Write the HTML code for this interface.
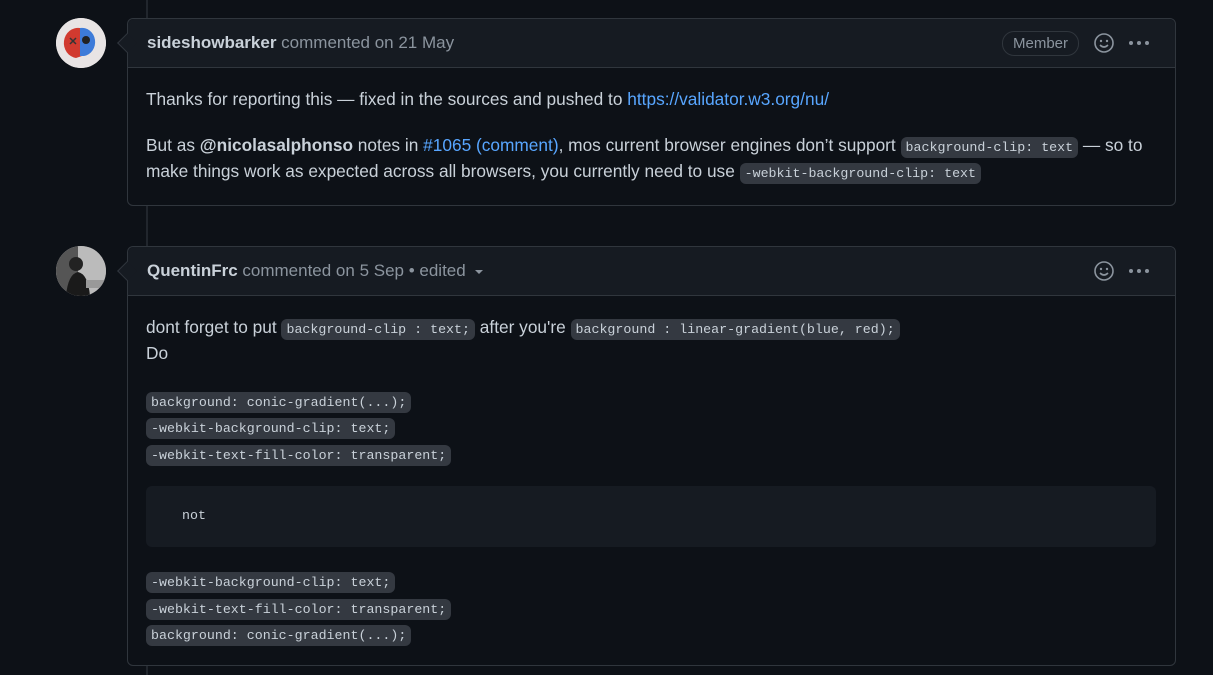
<!DOCTYPE html>
<html><head><meta charset="utf-8"><style>
*{box-sizing:border-box;margin:0;padding:0}
body{width:1213px;height:672px;background:#0d1117;position:relative;overflow:hidden;font-family:"Liberation Sans",sans-serif;color:#c9d1d9;font-size:17.3px}
.line{position:absolute;left:146px;width:2px;background:#21262d}
.box{position:absolute;left:127px;width:1049px;border:1px solid #30363d;border-radius:6px;background:#0d1117}
.hd{height:49px;background:#161b22;border-bottom:1px solid #30363d;border-radius:6px 6px 0 0;position:relative;padding-left:19px;line-height:48px;color:#8b949e;font-size:17px}
.hd b{color:#c9d1d9}
.arrow{position:absolute;left:-8px;top:17px;width:14px;height:14px;background:#161b22;border-left:1px solid #30363d;border-bottom:1px solid #30363d;transform:rotate(45deg)}
.av{position:absolute;left:56px;width:50px;height:50px;border-radius:50%;overflow:hidden}
.t{position:absolute;left:146px;white-space:nowrap}
a{color:#58a6ff;text-decoration:none}
code{font-family:"Liberation Mono",monospace;font-size:13.3px;background:#343941;border-radius:6px;padding:3px 5px;color:#c9d1d9}
.icons{position:absolute;right:26px;top:0;height:48px;display:flex;align-items:center;gap:14px}
.badge{border:1px solid #30363d;border-radius:12px;padding:0 10px;height:25px;line-height:24px;font-size:15px;color:#8b949e;margin-right:0}
.dots{display:flex;gap:4px}.dots i{width:4px;height:4px;border-radius:50%;background:#8b949e;display:block}
</style></head><body>
<div class="line" style="top:0;height:18px"></div>
<div class="line" style="top:205px;height:41px"></div>
<div class="line" style="top:665px;height:10px"></div>

<div class="av" style="top:18px;background:#eee">
<svg width="50" height="50"><circle cx="25" cy="25" r="25" fill="#e8e4e4"/><path d="M24 10 A14 15 0 0 0 20 40 L26 38 Z" fill="#d13a2f"/><path d="M24 10 A13 14 0 0 1 28 38 L24 38 Z" fill="#3d7bd9"/><circle cx="30" cy="22" r="4" fill="#222"/><path d="M14 20 l6 6 M20 20 l-6 6" stroke="#333" stroke-width="1.5"/></svg></div>
<div class="box" style="top:18px;height:188px">
<div class="hd"><div class="arrow"></div><b>sideshowbarker</b> commented on 21 May
<div class="icons"><span class="badge">Member</span>
<svg width="22" height="22" viewBox="0 0 22 22"><circle cx="11" cy="11" r="9" fill="none" stroke="#8b949e" stroke-width="1.6"/><circle cx="8" cy="9" r="1.2" fill="#8b949e"/><circle cx="14" cy="9" r="1.2" fill="#8b949e"/><path d="M7 13 q4 4 8 0" fill="none" stroke="#8b949e" stroke-width="1.6"/></svg>
<span class="dots"><i></i><i></i><i></i></span></div></div>
</div>
<div class="t" style="top:89px">Thanks for reporting this — fixed in the sources and pushed to <a>https://validator.w3.org/nu/</a></div>
<div class="t" style="top:135px">But as <b>@nicolasalphonso</b> notes in <a>#1065 (comment)</a>, mos current browser engines don’t support <code>background-clip: text</code> — so to</div>
<div class="t" style="top:161px">make things work as expected across all browsers, you currently need to use <code>-webkit-background-clip: text</code></div>

<div class="av" style="top:246px;background:#888">
<svg width="50" height="50"><rect width="50" height="50" fill="#bbb"/><rect x="0" y="0" width="22" height="50" fill="#555"/><circle cx="20" cy="18" r="7" fill="#222"/><path d="M10 50 Q12 28 22 26 Q32 28 34 50Z" fill="#1a1a1a"/><rect x="30" y="34" width="20" height="8" fill="#999"/></svg></div>
<div class="box" style="top:246px;height:420px">
<div class="hd"><div class="arrow"></div><b>QuentinFrc</b> commented on 5 Sep • edited <span style="display:inline-block;border-left:4px solid transparent;border-right:4px solid transparent;border-top:4px solid #8b949e;margin-left:5px;vertical-align:middle"></span>
<div class="icons">
<svg width="22" height="22" viewBox="0 0 22 22"><circle cx="11" cy="11" r="9" fill="none" stroke="#8b949e" stroke-width="1.6"/><circle cx="8" cy="9" r="1.2" fill="#8b949e"/><circle cx="14" cy="9" r="1.2" fill="#8b949e"/><path d="M7 13 q4 4 8 0" fill="none" stroke="#8b949e" stroke-width="1.6"/></svg>
<span class="dots"><i></i><i></i><i></i></span></div></div>
</div>
<div class="t" style="top:317px">dont forget to put <code>background-clip : text;</code> after you're <code>background : linear-gradient(blue, red);</code></div>
<div class="t" style="top:343px">Do</div>
<div class="t" style="top:390px"><code>background: conic-gradient(...);</code></div>
<div class="t" style="top:416px"><code>-webkit-background-clip: text;</code></div>
<div class="t" style="top:443px"><code>-webkit-text-fill-color: transparent;</code></div>
<div style="position:absolute;left:146px;top:486px;width:1010px;height:61px;background:#161b22;border-radius:6px"></div>
<div class="t" style="top:508px;left:182px;font-family:'Liberation Mono',monospace;font-size:13.3px">not</div>
<div class="t" style="top:570px"><code>-webkit-background-clip: text;</code></div>
<div class="t" style="top:597px"><code>-webkit-text-fill-color: transparent;</code></div>
<div class="t" style="top:623px"><code>background: conic-gradient(...);</code></div>
</body></html>
